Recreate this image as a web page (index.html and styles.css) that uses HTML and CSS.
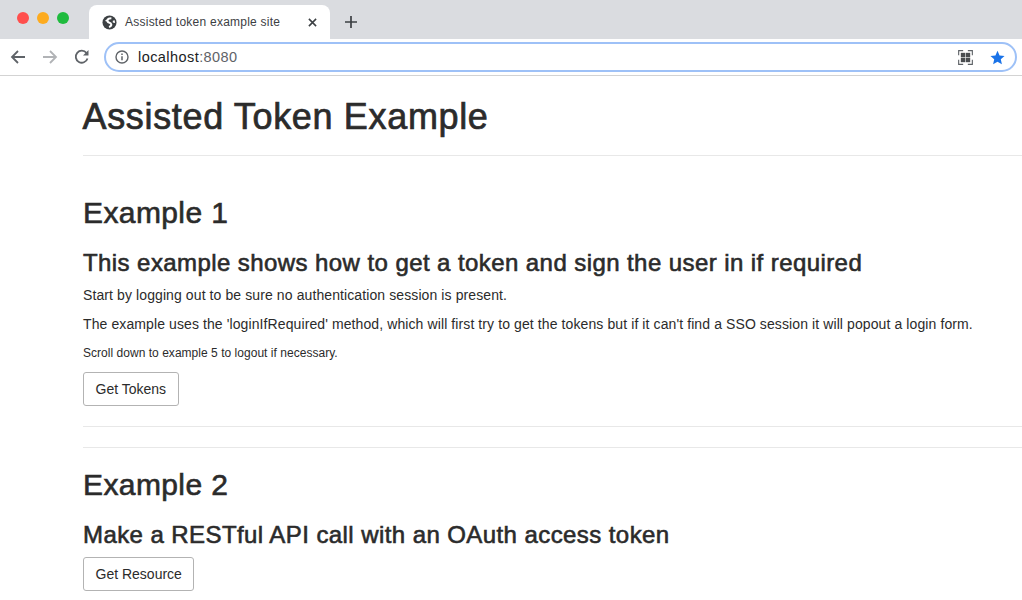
FILE: index.html
```html
<!DOCTYPE html>
<html lang="en">
<head>
<meta charset="utf-8">
<title>Assisted token example site</title>
<link rel="stylesheet" href="styles.css">
</head>
<body>
<header class="chrome">
  <div class="tabstrip">
    <div class="lights"><span class="light red"></span><span class="light amber"></span><span class="light green"></span></div>
    <div class="tab">
      <svg class="favicon" viewBox="0 0 16 16" width="15" height="15"><circle cx="8" cy="8" r="7.500" fill="#3c4043"/><path d="M10 3.500C5.500 3.500 4.500 7 7.500 8c3 .8 3.500 3.500 0 4.800" stroke="#fff" stroke-width="2.200" fill="none"/><path d="M3 6.500l3-2.500v3zM11.500 6l2-.5.500 3-2.500-.5z" fill="#fff"/></svg>
      <span class="tab-title">Assisted token example site</span>
      <svg class="tab-close" viewBox="0 0 10 10" width="9" height="9"><path d="M1 1l8 8M9 1l-8 8" stroke="#3c4043" stroke-width="1.700" fill="none"/></svg>
    </div>
    <svg class="newtab" viewBox="0 0 12 12" width="12" height="12"><path d="M6 0v12M0 6h12" stroke="#3c4043" stroke-width="1.700" fill="none"/></svg>
  </div>
  <div class="toolbar">
    <svg class="nav" viewBox="0 0 16 16" width="16" height="16"><path d="M15 8H2M8 2L2 8l6 6" stroke="#5f6368" stroke-width="1.800" fill="none"/></svg>
    <svg class="nav" viewBox="0 0 16 16" width="16" height="16"><path d="M1 8h13M8 2l6 6-6 6" stroke="#b1b3b6" stroke-width="1.800" fill="none"/></svg>
    <svg class="nav" viewBox="0 0 16 16" width="16" height="16"><path d="M13.500 9.500A6 6 0 1 1 12.500 4" stroke="#5f6368" stroke-width="1.800" fill="none"/><path d="M14.500 1v5.500H9z" fill="#5f6368"/></svg>
    <div class="omnibox">
      <svg class="info" viewBox="0 0 14 14" width="14" height="14"><circle cx="7" cy="7" r="6" stroke="#5f6368" stroke-width="1.400" fill="none"/><path d="M7 6.200v4M7 3.600v1.400" stroke="#5f6368" stroke-width="1.500"/></svg>
      <span class="url">localhost<span class="port">:8080</span></span>
      <svg class="qr" viewBox="0 0 16 16" width="15" height="15"><path d="M.7 5.500V.7h4.800M10.500.7h4.800v4.800M15.300 10.500v4.800h-4.800M5.500 15.300H.7v-4.800" stroke="#5f6368" stroke-width="1.200" fill="none"/><rect x="3" y="3" width="4.700" height="4.700" fill="#4a4d50"/><rect x="8.300" y="3" width="4.700" height="4.700" fill="#4a4d50"/><rect x="3" y="8.300" width="4.700" height="4.700" fill="#4a4d50"/><rect x="8.300" y="8.300" width="4.700" height="4.700" fill="#4a4d50"/></svg>
      <svg class="star" viewBox="0 0 16 16" width="15" height="15"><path d="M8 .8l2.200 5 5.300.5-4 3.600 1.200 5.300L8 12.400l-4.700 2.800 1.200-5.300-4-3.600 5.300-.5z" fill="#1a73e8"/></svg>
    </div>
  </div>
</header>
<main class="page">
  <h1 class="title">Assisted Token Example</h1>
  <hr class="rule">
  <section class="example first">
    <h2 class="example-name">Example 1</h2>
    <h3 class="example-desc">This example shows how to get a token and sign the user in if required</h3>
    <p class="copy">Start by logging out to be sure no authentication session is present.</p>
    <p class="copy last">The example uses the 'loginIfRequired' method, which will first try to get the tokens but if it can't find a SSO session it will popout a login form.</p>
    <p class="copy small">Scroll down to example 5 to logout if necessary.</p>
    <button class="btn" type="button">Get Tokens</button>
  </section>
  <hr class="rule after-example">
  <hr class="rule second">
  <section class="example">
    <h2 class="example-name">Example 2</h2>
    <h3 class="example-desc">Make a RESTful API call with an OAuth access token</h3>
    <button class="btn" type="button">Get Resource</button>
  </section>
</main>
</body>
</html>
```
FILE: styles.css
```css
* { box-sizing: border-box; }
html, body { height: 100%; }
body {
  margin: 0;
  height: 600px;
  overflow: hidden;
  background: #fff;
  font-family: "Liberation Sans", Arial, sans-serif;
  color: #2b2b2b;
}
.chrome { height: 76px; display: flex; flex-direction: column; border-bottom: 1px solid #d3d3d3; }
.tabstrip { height: 39px; background: #dadce0; display: flex; align-items: flex-end; }
.lights { width: 89px; height: 100%; display: flex; gap: 8px; padding: 12px 0 0 17px; }
.light { width: 12px; height: 12px; border-radius: 50%; }
.red { background: #ff4f4d; }
.amber { background: #fdab1f; }
.green { background: #1fbb3e; }
.tab {
  width: 241px; height: 34px; background: #fff; border-radius: 8px 8px 0 0;
  display: flex; align-items: center; padding: 0 13px 0 13px;
  font: 12px "Liberation Sans", sans-serif; color: #3c4043;
}
.favicon { flex: none; }
.tab-title { margin-left: 8px; flex: 1; white-space: nowrap; letter-spacing: .02em; }
.tab-close { flex: none; }
.newtab { margin: 0 0 11px 15px; }
.toolbar { flex: 1; display: flex; align-items: center; padding: 0 5px 0 10px; background: #fff; }
.nav { flex: none; margin-right: 16px; }
.nav:nth-child(3) { margin-right: 14px; }
.omnibox {
  flex: 1; height: 30px; border: 2px solid #9ec1f7; border-radius: 15px;
  display: flex; align-items: center; padding: 0 10px 0 9px;
}
.info { flex: none; }
.url { margin-left: 9px; flex: 1; font: 14.500px "Liberation Sans", sans-serif; letter-spacing: .03em; color: #202124; }
.port { color: #5f6368; }
.qr { margin-right: 17px; }
.page { padding-left: 83px; }
.title { margin: 19px 0 17px -.5px; font-size: 36px; line-height: 43px; font-weight: 400; letter-spacing: .66px; -webkit-text-stroke: .7px #2b2b2b; }
.rule { margin: 0; border: 0; border-top: 1px solid #e8e8e8; }
.example.first { padding-top: 39px; }
.example-name { margin: 0 0 18px; font-size: 30px; line-height: 35px; font-weight: 400; letter-spacing: .4px; -webkit-text-stroke: .6px #2b2b2b; }
.example-desc { margin: 0 0 8px; font-size: 24px; line-height: 29px; font-weight: 400; letter-spacing: .42px; -webkit-text-stroke: .6px #2b2b2b; }
.copy { margin: 0 0 8px; font-size: 14px; line-height: 21px; letter-spacing: .1px; }
.copy.last { margin-bottom: 10px; }
.copy.small { font-size: 12px; line-height: 17px; letter-spacing: .03px; margin-bottom: 10px; }
.btn {
  display: block; height: 34px; padding: 0 11.500px; background: #fff; border: 1px solid #b3b3b3;
  border-radius: 3px; font: 14px "Liberation Sans", sans-serif; color: #2b2b2b;
}
.after-example { margin-top: 20px; }
.second { margin-top: 20px; }
.second + .example { padding-top: 19px; }
```
